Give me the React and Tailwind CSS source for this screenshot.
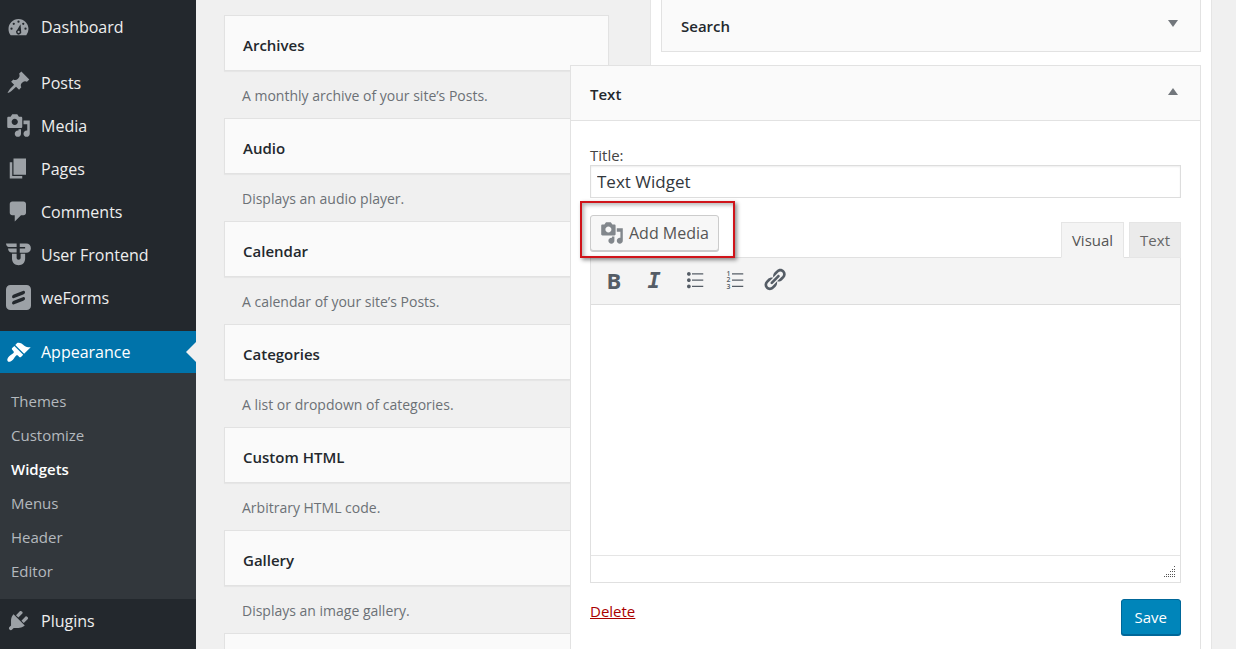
import { useState } from "react";
import clsx from "clsx";

const icons = {
  dashboard: (
    <path
      fillRule="evenodd"
      d="M3.76 17h12.48A8.1 8.1 0 0 0 18 11.96C18 7.56 14.42 4 10 4s-8 3.56-8 7.96c0 1.89.66 3.64 1.76 5.04zM10 5.2a.9.9 0 1 1 0 1.8.9.9 0 0 1 0-1.8zM6.2 6.9a.9.9 0 1 1 0 1.8.9.9 0 0 1 0-1.8zm7.6 0a.9.9 0 1 1 0 1.8.9.9 0 0 1 0-1.8zM4.4 10.8a.9.9 0 1 1 0 1.8.9.9 0 0 1 0-1.8zm11.2 0a.9.9 0 1 1 0 1.8.9.9 0 0 1 0-1.8zM11.6 8.2l.5 5.4a2.1 2.1 0 1 1-3.1-1zM10.1 13.4a.9.9 0 1 0 0 1.8.9.9 0 0 0 0-1.8z"
    />
  ),
  posts: (
    <path d="M10.44 3.02l1.82-1.82 6.36 6.35-1.83 1.82c-1.05-.68-2.48-.57-3.41.36l-.75.75c-.92.93-1.04 2.35-.35 3.41l-1.83 1.82-2.41-2.41-2.8 2.79c-.42.42-3.38 2.71-3.8 2.29s1.86-3.39 2.28-3.81l2.79-2.79L4.1 9.36l1.83-1.82c1.05.69 2.48.57 3.4-.36l.75-.75c.93-.92 1.05-2.35.36-3.41z" />
  ),
  media: (
    <path d="M13 11V4c0-.55-.45-1-1-1h-1.67L9 1H5L3.67 3H2c-.55 0-1 .45-1 1v7c0 .55.45 1 1 1h10c.55 0 1-.45 1-1zM7 4.5c1.38 0 2.5 1.12 2.5 2.5S8.38 9.5 7 9.5 4.5 8.38 4.5 7 5.62 4.5 7 4.5zM14 6h5v10.5c0 1.38-1.12 2.5-2.5 2.5S14 17.88 14 16.5s1.12-2.5 2.5-2.5c.17 0 .34.02.5.05V9h-3V6zm-4 8.05V13h2v3.5c0 1.38-1.12 2.5-2.5 2.5S7 17.88 7 16.5 8.12 14 9.5 14c.17 0 .34.02.5.05z" />
  ),
  pages: <path d="M6 15V2h10v13H6zm-1 1h8v2H3V5h2v11z" />,
  comments: (
    <path d="M5 2h9c1.1 0 2 .9 2 2v7c0 1.1-.9 2-2 2h-2l-5 5v-5H5c-1.1 0-2-.9-2-2V4c0-1.1.9-2 2-2z" />
  ),
  userFrontend: (
    <path d="M0 1.200h8.500V4H2.200C1 4 .2 2.800 0 1.200zM1.600 5.100h6.900v3.200H4.600c-1.700 0-2.800-1.300-3-3.200zM11 1.200h5.200c2.200 0 3.700 1.500 3.700 3.700s-1.500 3.700-3.700 3.700H11V5.200h4.300V4H11zM4.800 9.400h3.700v3.200c0 1 .6 1.600 1.600 1.600s1.600-.6 1.600-1.600V9.400h3.600v3.900c0 3-2.200 5.200-5.200 5.200s-5.300-2.200-5.300-5.200z" />
  ),
  weForms: (
    <path
      fillRule="evenodd"
      d="M3.500 0h13A3.500 3.500 0 0 1 20 3.500v13a3.500 3.500 0 0 1-3.500 3.500h-13A3.500 3.500 0 0 1 0 16.500v-13A3.500 3.500 0 0 1 3.500 0zM6.200 7.500 14 4.600c1.200-.3 1.500 1.400.9 2.200-.3.400-.7.600-1.100.8L6 10.500c-1.500.4-1.600-2.300.2-3zM6.200 12.500 14 9.600c1.200-.3 1.500 1.400.9 2.200-.3.400-.7.600-1.100.8L6 15.500c-1.500.4-1.600-2.300.2-3z"
    />
  ),
  appearance: (
    <path d="M14.48 11.06L7.41 3.99l1.5-1.5c.5-.56 2.3-.47 3.51.32 1.21.8 1.43 1.28 2.91 2.1 1.18.64 2.45 1.26 4.45.85zm-.71.71L6.7 4.7 4.93 6.47c-.39.39-.39 1.02 0 1.41l1.06 1.06c.39.39.39 1.03 0 1.42-.6.6-1.43 1.11-2.21 1.69-.35.26-.7.53-1.01.84C1.43 14.23.4 16.08 1.4 17.07c.99 1 2.84-.03 4.18-1.36.31-.31.58-.66.85-1.02.57-.78 1.08-1.61 1.69-2.21.39-.39 1.02-.39 1.41 0l1.06 1.06c.39.39 1.02.39 1.41 0z" />
  ),
  plugins: (
    <path d="M13.11 4.36L9.87 7.6 8 5.73l3.24-3.24c.35-.34 1.05-.2 1.56.32.52.51.66 1.21.31 1.55zm-8 1.77l.91-1.12 9.01 9.01-1.19.84c-.71.71-2.63 1.16-3.82 1.16H6.14L4.9 17.26c-.59.59-1.54.59-2.12 0-.59-.58-.59-1.53 0-2.12l1.24-1.24v-3.88c0-1.13.4-3.19 1.09-3.89zm7.26 3.97l3.24-3.24c.34-.35 1.04-.21 1.55.31.52.51.66 1.21.31 1.55l-3.24 3.25z" />
  ),
  bullets: (
    <path d="M5.500 7C4.670 7 4 6.330 4 5.500 4 4.680 4.670 4 5.500 4 6.320 4 7 4.680 7 5.500 7 6.330 6.320 7 5.500 7zM8 5h9v1H8V5zm-2.500 7c-.83 0-1.500-.67-1.500-1.500C4 9.680 4.670 9 5.500 9c.82 0 1.500.68 1.500 1.500 0 .83-.68 1.500-1.500 1.500zM8 10h9v1H8v-1zm-2.500 7c-.83 0-1.500-.67-1.500-1.500 0-.82.67-1.500 1.500-1.500.82 0 1.500.68 1.500 1.500 0 .83-.68 1.500-1.500 1.500zM8 15h9v1H8v-1z" />
  ),
  numbers: (
    <>
      <path d="M8 5h9v1H8zM8 10h9v1H8zM8 15h9v1H8z" />
      <g fontSize="5.5" fontFamily="Open Sans, sans-serif" fontWeight="600">
        <text x="3.5" y="7">1</text>
        <text x="3.5" y="12.3">2</text>
        <text x="3.5" y="17.6">3</text>
      </g>
    </>
  ),
  link: (
    <path d="M17.74 2.76c1.68 1.69 1.68 4.41 0 6.1l-1.53 1.52c-1.12 1.12-2.7 1.47-4.14 1.09l2.62-2.61.76-.77.76-.76c.84-.84.84-2.2 0-3.04-.84-.85-2.2-.85-3.04 0l-.77.76-3.38 3.38c-.37-1.44-.02-3.02 1.1-4.14l1.52-1.53c1.69-1.68 4.42-1.68 6.1 0zM8.59 13.43l5.34-5.34c.42-.42.42-1.1 0-1.52-.44-.43-1.13-.39-1.53 0l-5.33 5.34c-.42.42-.42 1.1 0 1.52.44.43 1.13.39 1.52 0zm-.76 2.29l4.14-4.15c.38 1.44.03 3.02-1.09 4.14l-1.52 1.53c-1.69 1.68-4.41 1.68-6.1 0-1.68-1.68-1.68-4.42 0-6.1l1.53-1.52c1.12-1.12 2.7-1.47 4.14-1.1l-4.14 4.15c-.85.84-.85 2.2 0 3.05.84.84 2.2.84 3.04 0z" />
  ),
};

const contentLinks = [
  { icon: "posts", label: "Posts" },
  { icon: "media", label: "Media" },
  { icon: "pages", label: "Pages" },
  { icon: "comments", label: "Comments" },
  { icon: "userFrontend", label: "User Frontend" },
  { icon: "weForms", label: "weForms" },
];

const appearanceLinks = ["Themes", "Customize", "Widgets", "Menus", "Header", "Editor"];

const availableWidgets = [
  { name: "Archives", description: "A monthly archive of your site’s Posts." },
  { name: "Audio", description: "Displays an audio player." },
  { name: "Calendar", description: "A calendar of your site’s Posts." },
  { name: "Categories", description: "A list or dropdown of categories." },
  { name: "Custom HTML", description: "Arbitrary HTML code." },
  { name: "Gallery", description: "Displays an image gallery." },
];

function Icon({ name, className }) {
  return (
    <svg viewBox="0 0 20 20" fill="currentColor" aria-hidden="true" className={clsx("shrink-0", className)}>
      {icons[name]}
    </svg>
  );
}

function MenuLink({ icon, label, active }) {
  return (
    <a
      href="#"
      className={clsx(
        "relative flex items-center gap-[10px] pl-[6px] text-base",
        active ? "h-[42px] bg-[#0073aa] text-white" : "h-[43px] text-[#eee]"
      )}
    >
      <Icon name={icon} className={clsx("size-[25px]", active ? "text-white" : "text-[#9ca1a6]")} />
      {label}
      {/* Notch pointing at the page */}
      {active && (
        <span className="absolute right-0 top-[11px] border-y-[10px] border-r-[10px] border-y-transparent border-r-[#f0f0f0]" />
      )}
    </a>
  );
}

function Sidebar() {
  return (
    <nav className="w-[196px] shrink-0 bg-[#23282d] pt-[5px]">
      <MenuLink icon="dashboard" label="Dashboard" />
      <div className="mt-[13px] mb-3">
        {contentLinks.map((link) => (
          <MenuLink key={link.label} icon={link.icon} label={link.label} />
        ))}
      </div>
      <MenuLink icon="appearance" label="Appearance" active />
      <ul className="bg-[#32373c] py-[11px]">
        {appearanceLinks.map((label) => (
          <li key={label}>
            <a
              href="#"
              className={clsx(
                "flex h-[34px] items-center pl-[11px] text-[15px]",
                label === "Widgets" ? "font-semibold text-white" : "text-[#b4b9be]"
              )}
            >
              {label}
            </a>
          </li>
        ))}
      </ul>
      <MenuLink icon="plugins" label="Plugins" />
    </nav>
  );
}

function AvailableWidget({ name, description }) {
  return (
    <div>
      <h3 className="flex h-[56px] items-center border border-[#e2e2e2] bg-[#fafafa] pt-[5px] pl-[18px] text-[15px] font-semibold text-[#23282d] shadow-[0_1px_1px_rgba(0,0,0,0.04)]">
        {name}
      </h3>
      <p className="flex h-[47px] items-center pt-[3px] pl-[18px] text-sm text-[#6c7176]">{description}</p>
    </div>
  );
}

function ToolbarButton({ label, children }) {
  return (
    <button
      type="button"
      aria-label={label}
      className="flex h-[46px] w-10 items-center justify-center pb-[3px] text-[#555d66]"
    >
      {children}
    </button>
  );
}

function Editor() {
  const [tab, setTab] = useState("Visual");

  return (
    <div className="mt-[17px]">
      <div className="flex items-start justify-between">
        <div className="relative">
          <button
            type="button"
            className="flex h-[36px] items-center gap-[5px] rounded-[3px] border border-[#ccc] bg-[#f7f7f7] px-[9px] text-base text-[#555] shadow-[0_1px_0_#ccc]"
          >
            <Icon name="media" className="size-[24px] text-[#82878c]" />
            Add Media
          </button>
          {/* Callout frame around the button */}
          <span className="pointer-events-none absolute -top-[14px] -right-[16px] -bottom-[7px] -left-[10px] z-10 border-2 border-[#d0141a] shadow-[2px_2px_4px_rgba(0,0,0,0.45),inset_2px_2px_4px_rgba(0,0,0,0.3)]" />
        </div>
        <div role="tablist" className="mt-[7px] -mb-px flex gap-[5px]">
          {["Visual", "Text"].map((name) => (
            <button
              key={name}
              type="button"
              role="tab"
              aria-selected={tab === name}
              onClick={() => setTab(name)}
              className={clsx(
                "relative h-[36px] border border-[#e5e5e5] px-[10px] text-[15px]",
                tab === name ? "border-b-[#f4f4f4] bg-[#f4f4f4] text-[#555]" : "bg-[#ebebeb] text-[#666]"
              )}
            >
              {name}
            </button>
          ))}
        </div>
      </div>
      <div className="border border-[#e0e0e0]">
        <div className="flex border-b border-[#ddd] bg-[#f4f4f4] pl-[3px]">
          <ToolbarButton label="Bold">
            <span className="text-[22px] leading-none font-bold">B</span>
          </ToolbarButton>
          <ToolbarButton label="Italic">
            <span className="pt-[3px] font-['DejaVu_Sans_Mono',monospace] text-[22px] leading-none font-bold italic">
              I
            </span>
          </ToolbarButton>
          <ToolbarButton label="Bulleted list">
            <Icon name="bullets" className="size-[25px]" />
          </ToolbarButton>
          <ToolbarButton label="Numbered list">
            <Icon name="numbers" className="size-[25px]" />
          </ToolbarButton>
          <ToolbarButton label="Insert link">
            <Icon name="link" className="size-[25px]" />
          </ToolbarButton>
        </div>
        <textarea
          aria-label="Content"
          className="block h-[250px] w-full resize-none bg-white p-3 text-base outline-none"
        />
        <div className="flex h-[27px] items-end justify-end border-t border-[#e5e5e5] p-1">
          {/* Resize grip */}
          <svg viewBox="0 0 12 12" className="size-3 text-[#555]" fill="currentColor" aria-hidden="true">
            <path d="M10 0h1v1h-1zM8 3h1v1H8zM10 3h1v1h-1zM6 5h1v1H6zM8 5h1v1H8zM10 5h1v1h-1zM2 8h1v1H2zM4 8h1v1H4zM6 8h1v1H6zM8 8h1v1H8zM10 8h1v1h-1zM0 10h1v1H0zM2 10h1v1H2zM4 10h1v1H4zM6 10h1v1H6zM8 10h1v1H8zM10 10h1v1h-1z" />
          </svg>
        </div>
      </div>
    </div>
  );
}

function WidgetArea() {
  const [title, setTitle] = useState("Text Widget");

  return (
    <section className="border-x border-[#e5e5e5] bg-white px-[10px]">
      <div className="flex h-[52px] items-center justify-between border border-t-0 border-[#e2e2e2] bg-[#fafafa] pr-[22px] pl-[19px]">
        <h3 className="pt-px text-[15px] font-semibold text-[#23282d]">Search</h3>
        <button
          type="button"
          aria-label="Open Search"
          className="mb-1 border-x-[5px] border-t-[7px] border-x-transparent border-t-[#72777c]"
        />
      </div>

      {/* Open widget, wider than its column */}
      <div className="relative z-10 mt-[13px] -ml-[91px] border border-[#e2e2e2] bg-white">
        <div className="flex h-[55px] items-center justify-between border-b border-[#e2e2e2] bg-[#fafafa] pr-[22px] pl-[19px]">
          <h3 className="pt-[3px] text-[15px] font-semibold text-[#23282d]">Text</h3>
          <button
            type="button"
            aria-label="Close Text"
            className="mb-1 border-x-[5px] border-b-[7px] border-x-transparent border-b-[#72777c]"
          />
        </div>
        <form className="px-[19px] pt-[24px] pb-8">
          <label htmlFor="widget-title" className="block text-[15px] leading-5 text-[#444]">
            Title:
          </label>
          <input
            id="widget-title"
            type="text"
            value={title}
            onChange={(e) => setTitle(e.target.value)}
            className="block h-[33px] w-full border border-[#ddd] bg-white px-[6px] text-[17px] text-[#32373c] shadow-[inset_0_1px_2px_rgba(0,0,0,0.07)]"
          />
          <Editor />
          <div className="mt-4 flex items-start justify-between">
            <a href="#" className="pt-[2px] text-[15px] leading-5 text-[#a00] underline">
              Delete
            </a>
            <button
              type="button"
              className="h-[36px] rounded-[3px] border border-[#006799] bg-[#0085ba] px-[13px] text-[15px] text-white shadow-[0_1px_0_#006799]"
            >
              Save
            </button>
          </div>
        </form>
      </div>
    </section>
  );
}

export default function App() {
  return (
    <div className="flex h-screen overflow-hidden bg-[#f0f0f0] font-['Open_Sans','Noto_Sans',sans-serif]">
      <Sidebar />
      <main className="grid flex-1 grid-cols-[385fr_562fr] gap-[41px] pr-6 pl-7">
        <section className="flex flex-col pt-[15px]">
          {availableWidgets.map((widget) => (
            <AvailableWidget key={widget.name} name={widget.name} description={widget.description} />
          ))}
          <div className="flex-1 border border-b-0 border-[#e2e2e2] bg-[#fafafa]" />
        </section>
        <WidgetArea />
      </main>
    </div>
  );
}
